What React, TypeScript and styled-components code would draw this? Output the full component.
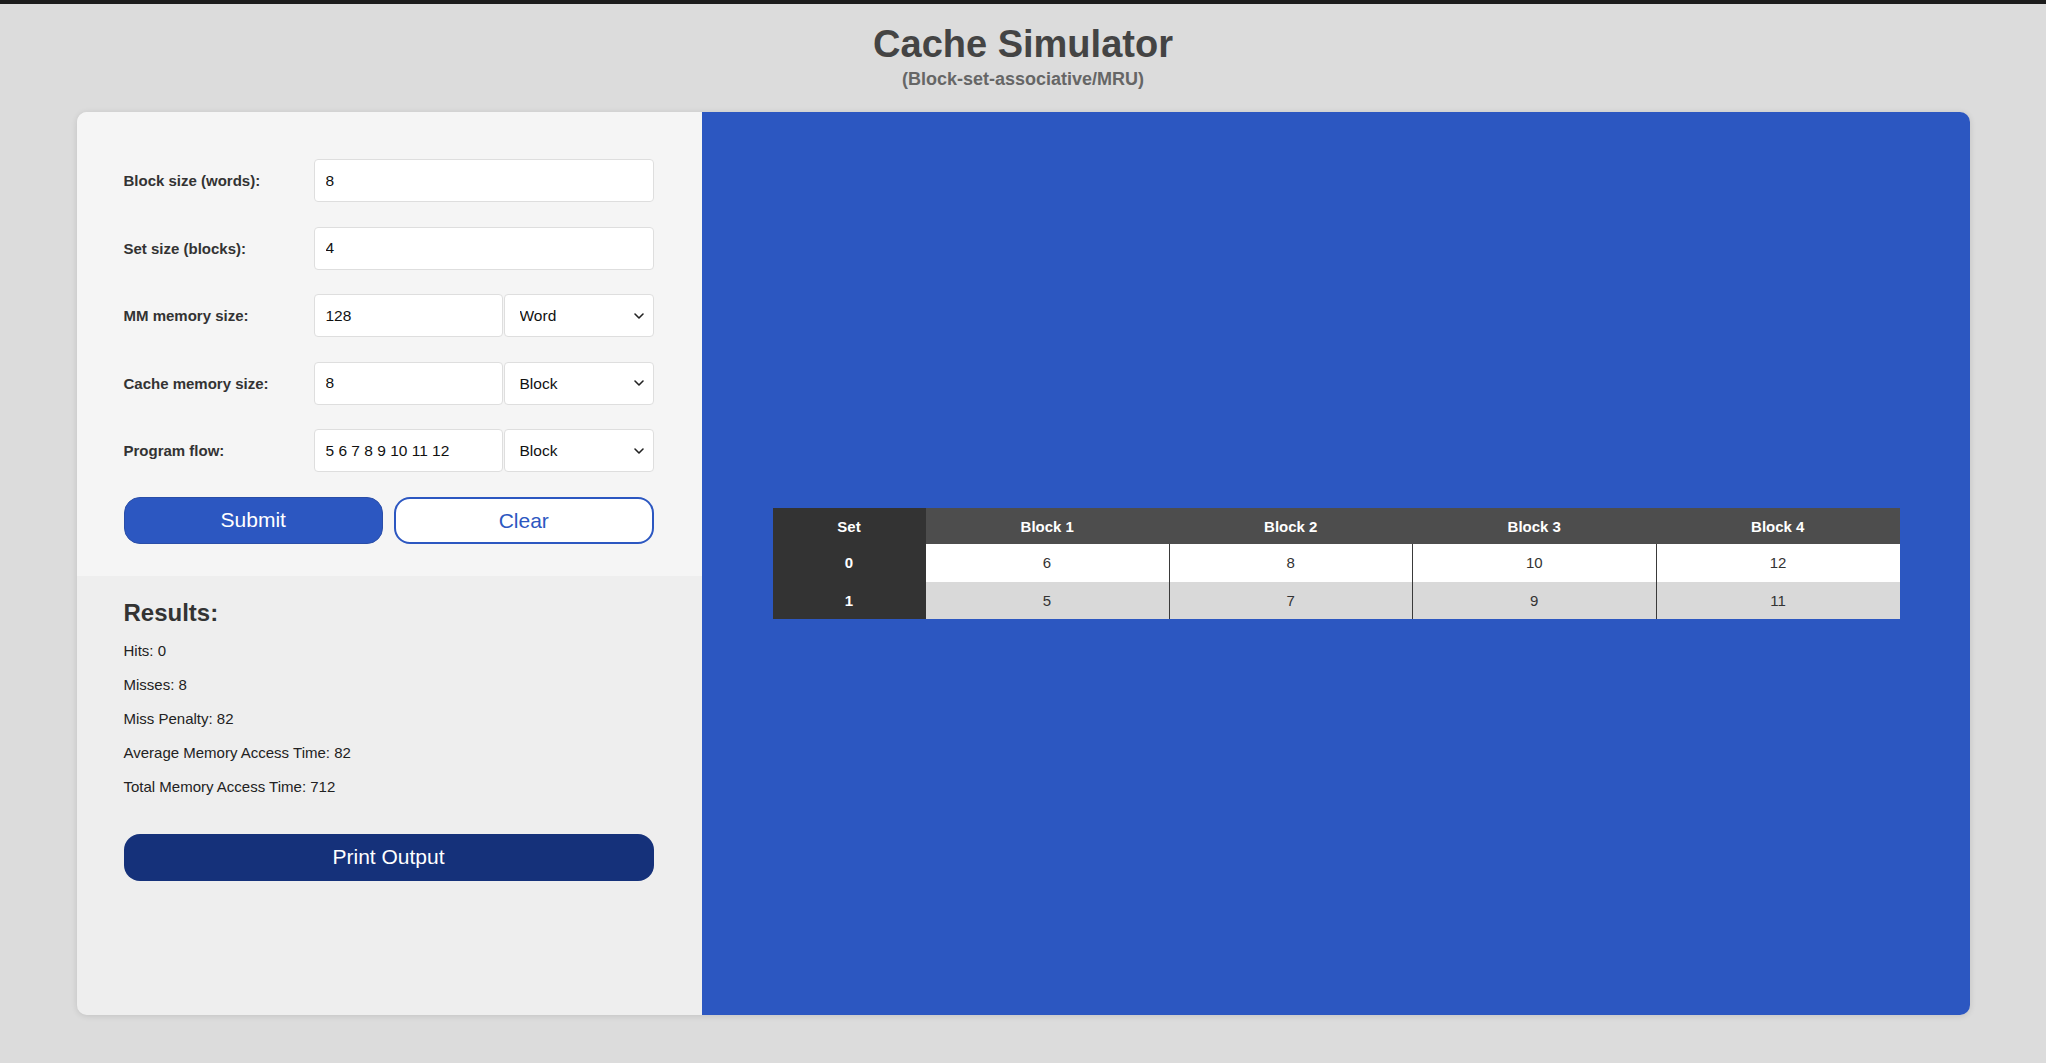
import React from "react"
import styled, { createGlobalStyle } from "styled-components"

const GlobalStyle = createGlobalStyle`
    * {
        box-sizing: border-box;
    }
    body {
        margin: 0;
        background: #dcdcdc;
        border-top: 4px solid #1c1c1c;
        font-family: "Liberation Sans", Arial, Helvetica, sans-serif;
        color: #333;
    }
`

const Page = styled.div`
    display: flex;
    flex-direction: column;
    align-items: center;
    padding-bottom: 48px;
`

const Header = styled.header`
    text-align: center;
    margin-top: 18px;
    margin-bottom: 22px;
`

const Title = styled.h1`
    margin: 0;
    font-size: 38px;
    line-height: 44px;
    font-weight: 700;
    color: #444;
`

const Subtitle = styled.div`
    margin-top: 2px;
    font-size: 18px;
    line-height: 22px;
    font-weight: 700;
    color: #666;
`

const Panel = styled.main`
    width: 1893px;
    height: 903px;
    display: grid;
    grid-template-columns: 625px 1fr;
    border-radius: 10px;
    overflow: hidden;
    box-shadow: 0 1px 6px rgba(0, 0, 0, 0.12);
`

const Sidebar = styled.section`
    display: flex;
    flex-direction: column;
    background: #eeeeee;
`

const FormSection = styled.div`
    background: #f5f5f5;
    padding: 47px 48px 32px 47px;
    display: flex;
    flex-direction: column;
    gap: 24.5px;
`

const FieldRow = styled.div`
    display: grid;
    grid-template-columns: 190px 1fr;
    align-items: center;
`

const Label = styled.label`
    font-size: 15px;
    font-weight: 700;
    color: #333;
`

const InputGroup = styled.div<{ split?: boolean }>`
    display: grid;
    grid-template-columns: ${({ split }) => (split ? "189px 1fr" : "1fr")};
    gap: 1px;
`

const TextInput = styled.input`
    height: 43px;
    width: 100%;
    border: 1px solid #dedede;
    border-radius: 4px;
    background: #fff;
    padding: 0 11px;
    font-family: inherit;
    font-size: 15.5px;
    color: #111;
    outline: none;
`

const SelectBox = styled.div`
    position: relative;
    height: 43px;
`

const Select = styled.select`
    appearance: none;
    -webkit-appearance: none;
    width: 100%;
    height: 100%;
    border: 1px solid #dedede;
    border-radius: 4px;
    background: #fff;
    padding: 0 15px;
    font-family: inherit;
    font-size: 15.5px;
    color: #111;
    outline: none;
`

const Chevron = styled.svg`
    position: absolute;
    right: 5px;
    top: 50%;
    transform: translateY(-50%);
    pointer-events: none;
`

const ButtonRow = styled.div`
    display: grid;
    grid-template-columns: 1fr 1fr;
    gap: 11px;
`

const Button = styled.button<{ variant: "primary" | "outline" | "dark" }>`
    height: 47px;
    border-radius: 16px;
    font-family: inherit;
    font-size: 21px;
    cursor: pointer;
    ${({ variant }) =>
        variant === "primary"
            ? "background: #2c57c1; color: #fff; border: 1px solid #2a4ea8; padding-bottom: 2px;"
            : variant === "outline"
            ? "background: #fff; color: #2c57c1; border: 2px solid #2c57c1; padding-top: 3px;"
            : "background: #15317a; color: #fff; border: none; width: 100%;"}
`

const ResultsSection = styled.div`
    flex: 1;
    padding: 23px 48px 0 47px;
`

const ResultsTitle = styled.h2`
    margin: 0 0 7px;
    font-size: 24px;
    line-height: 28px;
    font-weight: 700;
    color: #333;
`

const ResultLine = styled.p`
    margin: 0;
    font-size: 15px;
    line-height: 34px;
    color: #222;
`

const PrintWrap = styled.div`
    margin-top: 30px;
`

const Stage = styled.section`
    background: #2c57c1;
    display: flex;
    align-items: center;
    padding: 0 70px 0 71px;
`

const CacheTable = styled.table`
    width: 100%;
    border-collapse: collapse;
    font-size: 15px;
`

const HeadCell = styled.th<{ setCol?: boolean }>`
    height: 36px;
    padding: 0;
    font-weight: 700;
    color: #fff;
    background: ${({ setCol }) => (setCol ? "#333" : "#4d4d4d")};
    width: ${({ setCol }) => (setCol ? "153px" : "auto")};
`

const Row = styled.tr<{ alt?: boolean }>`
    background: ${({ alt }) => (alt ? "#d9d9d9" : "#fff")};
`

const SetCell = styled.td`
    height: 37.5px;
    padding: 0;
    text-align: center;
    font-weight: 700;
    color: #fff;
    background: #333;
`

const Cell = styled.td`
    height: 37.5px;
    padding: 0;
    text-align: center;
    color: #333;
    & + & {
        border-left: 1px solid #3a3a3a;
    }
`

const ChevronIcon = () => (
    <Chevron width="20" height="20" viewBox="0 0 20 20" fill="none">
        <path d="M6 8l4 4 4-4" stroke="#222" strokeWidth="1.6" strokeLinecap="round" strokeLinejoin="round" />
    </Chevron>
)

const cacheRows = [
    { set: 0, blocks: [6, 8, 10, 12] },
    { set: 1, blocks: [5, 7, 9, 11] },
]

const results = [
    "Hits: 0",
    "Misses: 8",
    "Miss Penalty: 82",
    "Average Memory Access Time: 82",
    "Total Memory Access Time: 712",
]

const App: React.FC = () => {
    return (
        <>
            <GlobalStyle />
            <Page>
                <Header>
                    <Title>Cache Simulator</Title>
                    <Subtitle>(Block-set-associative/MRU)</Subtitle>
                </Header>
                <Panel>
                    <Sidebar>
                        <FormSection>
                            <FieldRow>
                                <Label>Block size (words):</Label>
                                <InputGroup>
                                    <TextInput defaultValue="8" />
                                </InputGroup>
                            </FieldRow>
                            <FieldRow>
                                <Label>Set size (blocks):</Label>
                                <InputGroup>
                                    <TextInput defaultValue="4" />
                                </InputGroup>
                            </FieldRow>
                            <FieldRow>
                                <Label>MM memory size:</Label>
                                <InputGroup split>
                                    <TextInput defaultValue="128" />
                                    <SelectBox>
                                        <Select defaultValue="word">
                                            <option value="word">Word</option>
                                            <option value="block">Block</option>
                                        </Select>
                                        <ChevronIcon />
                                    </SelectBox>
                                </InputGroup>
                            </FieldRow>
                            <FieldRow>
                                <Label>Cache memory size:</Label>
                                <InputGroup split>
                                    <TextInput defaultValue="8" />
                                    <SelectBox>
                                        <Select defaultValue="block">
                                            <option value="word">Word</option>
                                            <option value="block">Block</option>
                                        </Select>
                                        <ChevronIcon />
                                    </SelectBox>
                                </InputGroup>
                            </FieldRow>
                            <FieldRow>
                                <Label>Program flow:</Label>
                                <InputGroup split>
                                    <TextInput defaultValue="5 6 7 8 9 10 11 12" />
                                    <SelectBox>
                                        <Select defaultValue="block">
                                            <option value="word">Word</option>
                                            <option value="block">Block</option>
                                        </Select>
                                        <ChevronIcon />
                                    </SelectBox>
                                </InputGroup>
                            </FieldRow>
                            <ButtonRow>
                                <Button variant="primary">Submit</Button>
                                <Button variant="outline">Clear</Button>
                            </ButtonRow>
                        </FormSection>
                        <ResultsSection>
                            <ResultsTitle>Results:</ResultsTitle>
                            {results.map((r) => (
                                <ResultLine key={r}>{r}</ResultLine>
                            ))}
                            <PrintWrap>
                                <Button variant="dark">Print Output</Button>
                            </PrintWrap>
                        </ResultsSection>
                    </Sidebar>
                    <Stage>
                        <CacheTable>
                            <thead>
                                <tr>
                                    <HeadCell setCol>Set</HeadCell>
                                    {[1, 2, 3, 4].map((n) => (
                                        <HeadCell key={n}>Block {n}</HeadCell>
                                    ))}
                                </tr>
                            </thead>
                            <tbody>
                                {cacheRows.map((row) => (
                                    <Row key={row.set} alt={row.set % 2 === 1}>
                                        <SetCell>{row.set}</SetCell>
                                        {row.blocks.map((b, i) => (
                                            <Cell key={i}>{b}</Cell>
                                        ))}
                                    </Row>
                                ))}
                            </tbody>
                        </CacheTable>
                    </Stage>
                </Panel>
            </Page>
        </>
    )
}

export default App
